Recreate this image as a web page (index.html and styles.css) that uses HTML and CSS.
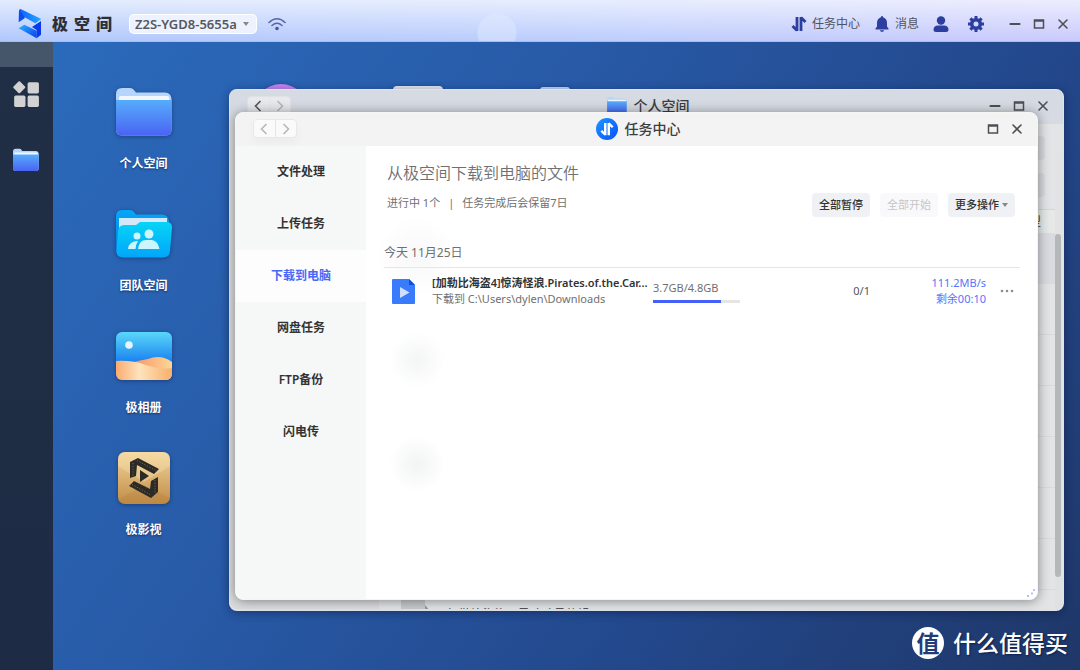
FILE: index.html
```html
<!DOCTYPE html>
<html lang="zh-CN">
<head>
<meta charset="utf-8">
<title>极空间</title>
<link rel="stylesheet" href="styles.css">
</head>
<body>
<svg class="defs" aria-hidden="true">
  <defs>
    <linearGradient id="folderFront" x1="0" y1="0" x2="0" y2="1"><stop offset="0" stop-color="#56adfb"/><stop offset="1" stop-color="#4a63f4"/></linearGradient>
    <linearGradient id="teamBack" x1="0" y1="0" x2="0" y2="1"><stop offset="0" stop-color="#04a8f8"/><stop offset="1" stop-color="#0a7be0"/></linearGradient>
    <linearGradient id="teamFront" x1="0" y1="0" x2="0" y2="1"><stop offset="0" stop-color="#06d4f6"/><stop offset="1" stop-color="#01a6fb"/></linearGradient>
    <linearGradient id="sky" x1="0" y1="0" x2="0" y2="1"><stop offset="0" stop-color="#5ad8fa"/><stop offset=".6" stop-color="#1c85f0"/></linearGradient>
    <linearGradient id="sand" x1="0" y1="0" x2="1" y2="0"><stop offset="0" stop-color="#fbab70"/><stop offset=".42" stop-color="#fde3bb"/><stop offset="1" stop-color="#f8b06a"/></linearGradient>
    <linearGradient id="dune" x1="0" y1="0" x2="1" y2="0"><stop offset="0" stop-color="#f98f62"/><stop offset="1" stop-color="#fcd697"/></linearGradient>
    <linearGradient id="gold" x1="0" y1="0" x2="0" y2="1"><stop offset="0" stop-color="#f2d59b"/><stop offset="1" stop-color="#c08c47"/></linearGradient>
    <linearGradient id="logoTop" x1="0" y1="0" x2="1" y2="0"><stop offset="0" stop-color="#0d62ff"/><stop offset="1" stop-color="#27a8ff"/></linearGradient>
    <linearGradient id="logoEnd" x1="0" y1="0" x2="1" y2="1"><stop offset="0" stop-color="#2bb4ff"/><stop offset="1" stop-color="#0a3cec"/></linearGradient>
  </defs>
  <symbol id="folder" viewBox="0 0 56 48">
    <path d="M0 6Q0 0 6 0H14Q16.500 0 18 2L20 4.500H49Q55 4.500 55.500 11V42Q55.500 47.500 49 47.500H6.500Q0 47.500 0 42Z" fill="#b5d5fc"/>
    <rect x="3" y="8" width="50" height="6" rx="1.500" fill="#f2f7fe"/>
    <path d="M0 12H55.500V42Q55.500 47.500 49 47.500H6.500Q0 47.500 0 42Z" fill="url(#folderFront)"/>
  </symbol>
  <symbol id="transfer" viewBox="0 0 16 16">
    <path d="M6 1V15M6 14.500L1.500 10M10 15V1M10 1.500L14.500 6" fill="none" stroke="currentColor" stroke-width="2.800"/>
  </symbol>
  <symbol id="prev" viewBox="0 0 8 12"><path d="M6.500 1L1.500 6L6.500 11" fill="none" stroke="currentColor" stroke-width="1.600"/></symbol>
  <symbol id="next" viewBox="0 0 8 12"><path d="M1.500 1L6.500 6L1.500 11" fill="none" stroke="currentColor" stroke-width="1.600"/></symbol>
  <symbol id="min" viewBox="0 0 12 12"><path d="M1.500 6H10.500" stroke="currentColor" stroke-width="2.200" stroke-linecap="round"/></symbol>
  <symbol id="max" viewBox="0 0 12 12"><path d="M1.500 2H10.500V10H1.500ZM1 3H11" fill="none" stroke="currentColor" stroke-width="1.500"/></symbol>
  <symbol id="close" viewBox="0 0 12 12"><path d="M2 2L10 10M10 2L2 10" stroke="currentColor" stroke-width="1.600" stroke-linecap="round"/></symbol>
</svg>
<div class="app">
  <header class="topbar">
    <div class="brand">
      <svg class="logo" viewBox="18 10 72 93" aria-hidden="true">
        <path d="M24 12L88 43L70 56L38 38Z" fill="url(#logoTop)"/>
        <path d="M24 12L38 36V41L20 53L21 18Z" fill="#0b4df2"/>
        <path d="M20 71L37 60L74 78V101Z" fill="url(#logoEnd)"/>
        <path d="M87 49V90L74 101V76L60 67Z" fill="#0a3bea"/>
      </svg>
      <div class="brand-name"><span>极</span><span>空</span><span>间</span></div>
    </div>
    <div class="device">
      <select class="device-select" aria-label="设备"><option>Z2S-YGD8-5655a</option></select>
      <svg class="caret" viewBox="0 0 6 4" aria-hidden="true"><path d="M0 0H6L3 4Z" fill="currentColor"/></svg>
    </div>
    <svg class="wifi" viewBox="0 0 18 14" aria-hidden="true"><path d="M1 5.500Q9-2 17 5.500M4 8.500Q9 4 14 8.500" fill="none" stroke="#5a65a8" stroke-width="1.600" stroke-linecap="round"/><circle cx="9" cy="11.500" r="1.800" fill="#4a559f"/></svg>
    <nav class="top-actions">
      <button class="top-action"><svg class="ic16" aria-hidden="true"><use href="#transfer"/></svg>任务中心</button>
      <button class="top-action"><svg class="ic16" viewBox="0 0 16 16" aria-hidden="true"><path d="M8 0Q9.300 0 9.300 1.500Q13 2.600 13 7V10.500L14.500 12.500V13.500H1.500V12.500L3 10.500V7Q3 2.600 6.700 1.500Q6.700 0 8 0ZM5.800 14.200H10.200Q9.500 16 8 16T5.800 14.200Z" fill="currentColor"/></svg>消息</button>
      <button class="top-action" aria-label="用户"><svg class="ic16" viewBox="0 0 16 16" aria-hidden="true"><circle cx="8" cy="4.500" r="4.200" fill="currentColor"/><path d="M.500 14Q.500 9.500 5 9.500H11Q15.500 9.500 15.500 14Q15.500 16 13 16H3Q.500 16 .500 14Z" fill="currentColor"/></svg></button>
      <button class="top-action" aria-label="设置"><svg class="ic16" viewBox="0 0 16 16" aria-hidden="true"><circle cx="8" cy="8" r="4.300" fill="none" stroke="currentColor" stroke-width="3.600"/><path d="M8 0V3M8 13V16M0 8H3M13 8H16M2.350 2.350L4.400 4.400M11.600 11.600L13.650 13.650M2.350 13.650L4.400 11.600M11.600 4.400L13.650 2.350" stroke="currentColor" stroke-width="3"/></svg></button>
    </nav>
    <div class="win-controls">
      <button aria-label="最小化"><svg><use href="#min"/></svg></button>
      <button aria-label="最大化"><svg><use href="#max"/></svg></button>
      <button aria-label="关闭"><svg><use href="#close"/></svg></button>
    </div>
  </header>
  <div class="workspace">
    <aside class="dock">
      <button class="dock-item" aria-label="应用"><svg class="dock-apps" viewBox="0 0 26 26" aria-hidden="true"><rect x="2.500" y="2.500" width="8.500" height="8.500" rx="1" transform="rotate(45 6.750 6.750)"/><rect x="14.500" y="2" width="10.500" height="10.500" rx="1.500"/><rect x="2" y="14.500" width="10.500" height="10.500" rx="1.500"/><rect x="14.500" y="14.500" width="10.500" height="10.500" rx="1.500"/></svg></button>
      <button class="dock-item" aria-label="打开个人空间"><svg class="dock-folder" aria-hidden="true"><use href="#folder"/></svg></button>
    </aside>
    <main class="desktop">
      <div class="shortcuts">
        <a class="shortcut" href="#"><span class="shortcut-icon"><svg class="app-wide" aria-hidden="true"><use href="#folder"/></svg></span><span class="shortcut-name">个人空间</span></a>
        <a class="shortcut" href="#"><span class="shortcut-icon"><svg class="app-wide" viewBox="0 0 56 48" aria-hidden="true"><path d="M0 6Q0 0 6 0H14Q16.500 0 18 2L20 4.500H46Q52 4.500 53 11V42H0Z" fill="url(#teamBack)"/><path d="M3 8H51V20H3Z" fill="#d5e8fb"/><path d="M2 22Q2.500 15 8 15H20L24 12H50Q56.500 12 56 18L54 41Q53.500 47.500 47 47.500H7Q0 47.500 .500 41Z" fill="url(#teamFront)"/><g fill="#cdf5fd"><circle cx="33" cy="24" r="4.500"/><circle cx="21" cy="26" r="3.500"/><path d="M22 39Q23 30 30 30H36Q42 31 43.500 39Z"/><path d="M12 39Q13 31 22 31Q20 34 19.500 39Z"/></g></svg></span><span class="shortcut-name">团队空间</span></a>
        <a class="shortcut" href="#"><span class="shortcut-icon"><svg class="app-wide" viewBox="0 0 56 48" aria-hidden="true"><clipPath id="photoClip"><rect width="56" height="48" rx="6"/></clipPath><g clip-path="url(#photoClip)"><rect width="56" height="48" fill="url(#sky)"/><circle cx="13" cy="13" r="3.800" fill="#e6f4fe"/><path d="M14 31Q25 28 32 27Q45 22 56 30V48H14Z" fill="url(#dune)"/><path d="M0 29Q16 28 30 33Q44 38 56 36V48H0Z" fill="url(#sand)"/></g></svg></span><span class="shortcut-name">极相册</span></a>
        <a class="shortcut" href="#"><span class="shortcut-icon"><svg class="app-square" viewBox="0 0 52 52" aria-hidden="true"><rect width="52" height="52" rx="7" fill="url(#gold)"/><path d="M0 14L26 30L52 14V7Q52 0 45 0H7Q0 0 0 7Z" fill="#fbe4b4" opacity=".35"/><path d="M0 48L26 33L52 46Q51 52 45 52H7Q1 52 0 48Z" fill="#b57a32" opacity=".25"/><g fill="#2c2a27"><path d="M20 6L41 17L36 22L19 13L18 24L12 26V10Z"/><path d="M22 18L31 24L22 30Z"/><path d="M40 25V40L33 46L11 34L16 29L32 37L33 29Z"/></g><path d="M19 8.500L39 19M15 11V25M37 28V41M14 32.500L33 43" fill="none" stroke="#8a7650" stroke-width=".8" stroke-dasharray="1.200 1.600"/></svg></span><span class="shortcut-name">极影视</span></a>
        <span class="shortcut peek"><span class="shortcut-icon"><i class="peek-disc"></i></span></span>
        <span class="shortcut peek"><span class="shortcut-icon"><i class="peek-card"></i></span></span>
        <span class="shortcut peek"><span class="shortcut-icon"><i class="peek-tab"></i></span></span>
      </div>

      <section class="window files-window">
        <header class="titlebar">
          <div class="pager"><button aria-label="后退" class="can"><svg><use href="#prev"/></svg></button><button aria-label="前进"><svg><use href="#next"/></svg></button></div>
          <h2 class="title"><svg class="title-folder" aria-hidden="true"><use href="#folder"/></svg>个人空间</h2>
          <div class="win-controls">
            <button aria-label="最小化"><svg><use href="#min"/></svg></button>
            <button aria-label="最大化"><svg><use href="#max"/></svg></button>
            <button aria-label="关闭"><svg><use href="#close"/></svg></button>
          </div>
        </header>
        <div class="files-body">
          <div class="files-side"></div>
          <div class="files-main">
            <div class="files-tools"><i></i><i></i></div>
            <div class="files-head">类型</div>
            <div class="files-list">
              <div class="files-row selected"></div>
              <div class="files-row"></div>
              <div class="files-row"></div>
              <div class="files-row"></div>
              <div class="files-row"></div>
              <div class="files-row"></div>
              <div class="files-row"></div>
              <div class="files-row"><svg class="file-thumb" viewBox="0 0 32 36" aria-hidden="true"><path d="M0 0H24V36H0Z" fill="#c9cacc"/><path d="M24 8L32 17H24Z" fill="#9b9d9f"/></svg><span>[加勒比海盗4]黑珍珠号的诅咒.Pirates.of.the.Caribbean</span></div>
            </div>
          </div>
          <div class="scroll"><i></i></div>
        </div>
      </section>

      <section class="window task-window">
        <header class="titlebar">
          <div class="pager"><button aria-label="后退"><svg><use href="#prev"/></svg></button><button aria-label="前进"><svg><use href="#next"/></svg></button></div>
          <h2 class="title"><span class="title-disc"><svg aria-hidden="true"><use href="#transfer"/></svg></span>任务中心</h2>
          <div class="win-controls">
            <button aria-label="最大化"><svg><use href="#max"/></svg></button>
            <button aria-label="关闭"><svg><use href="#close"/></svg></button>
          </div>
        </header>
        <div class="task-body">
          <nav class="tabs">
            <button>文件处理</button>
            <button>上传任务</button>
            <button class="active">下载到电脑</button>
            <button>网盘任务</button>
            <button>FTP备份</button>
            <button>闪电传</button>
          </nav>
          <div class="task-main">
            <div class="intro">
              <div>
                <h1>从极空间下载到电脑的文件</h1>
                <p><span>进行中 1个</span><span>|</span><span>任务完成后会保留7日</span></p>
              </div>
              <div class="bulk">
                <button>全部暂停</button>
                <button disabled>全部开始</button>
                <button aria-haspopup="menu">更多操作<svg class="caret" viewBox="0 0 6 4" aria-hidden="true"><path d="M0 0H6L3 4Z" fill="currentColor"/></svg></button>
              </div>
            </div>
            <h3 class="day">今天 11月25日</h3>
            <div class="task">
              <svg class="task-icon" viewBox="0 0 23 25" aria-hidden="true"><path d="M1 0H17L23 6V24Q23 25 22 25H1Q0 25 0 24V1Q0 0 1 0Z" fill="#3a7bfb"/><path d="M17 0L23 6H17Z" fill="#0c4fe6"/><path d="M8 8L17.500 13.500L8 19Z" fill="#cfdffe"/></svg>
              <div class="task-file"><strong>[加勒比海盗4]惊涛怪浪.Pirates.of.the.Car...</strong><span>下载到 C:\Users\dylen\Downloads</span></div>
              <div class="task-progress"><span id="size">3.7GB/4.8GB</span><div class="bar" role="progressbar" aria-labelledby="size" aria-valuenow="78"><i style="width:78%"></i></div></div>
              <div class="task-count">0/1</div>
              <div class="task-speed"><span>111.2MB/s</span><span>剩余00:10</span></div>
              <button class="more" aria-label="更多"><svg viewBox="0 0 14 4" aria-hidden="true"><circle cx="2" cy="2" r="1.300"/><circle cx="7" cy="2" r="1.300"/><circle cx="12" cy="2" r="1.300"/></svg></button>
            </div>
          </div>
        </div>
        <svg class="grip" viewBox="0 0 8 8" aria-hidden="true"><path d="M6 0H8V2H6ZM4 3.500H6V5.500H4ZM0 6H2V8H0Z" fill="#b9c1f3"/></svg>
      </section>
    </main>
  </div>
  <div class="watermark"><span class="watermark-badge">值</span>什么值得买</div>
</div>
</body>
</html>
```
FILE: styles.css
```css
* { box-sizing: border-box; }
body {
  margin: 0;
  font: 12px/16px "Noto Sans", "Noto Sans CJK SC", sans-serif;
  color: #333;
}
h1, h2, h3, p { margin: 0; font-weight: 400; }
button { border: 0; padding: 0; background: none; font: inherit; color: inherit; }
svg, i { display: block; flex: none; }
.defs { position: absolute; width: 0; height: 0; }

.app { position: relative; display: flex; flex-direction: column; height: 100vh; overflow: hidden; }

/* Top bar */
.topbar {
  display: flex;
  align-items: center;
  flex: none;
  height: 42px;
  padding: 6px 11px 0 18px;
  border-bottom: 1px solid #a9bcf3;
  background:
    radial-gradient(circle at 497px 33px, rgba(225, 235, 255, .45) 19px, transparent 20px),
    linear-gradient(180deg, rgba(255, 255, 255, .65), rgba(255, 255, 255, 0)),
    linear-gradient(90deg, #b0c8fc, #bccdfd 55%, #cacafc);
}
.brand { display: flex; align-items: center; gap: 10px; }
.logo { width: 24px; height: 31px; }
.brand-name { display: flex; gap: 6px; font-size: 16px; line-height: 24px; font-weight: 900; color: #2d3038; }
.device {
  display: flex;
  align-items: center;
  margin-left: 18px;
  padding: 0 7px 0 5px;
  height: 18px;
  border-radius: 4px;
  background: #edf2fe;
  box-shadow: 0 0 0 1px #fff;
  color: #999;
}
.device-select {
  appearance: none;
  border: 0;
  padding: 0;
  width: 108px;
  background: none;
  font: 600 13px/18px "Noto Sans", sans-serif;
  color: #56585f;
}
.caret { width: 6px; height: 4px; color: #888; }
.wifi { width: 18px; height: 14px; margin-left: 12px; }
.top-actions { display: flex; align-items: center; gap: 14px; margin-left: auto; color: #2c3f9f; }
.top-action { display: flex; align-items: center; gap: 5px; color: #2c3f9f; }
.top-action + .top-action + .top-action { margin-right: 5px; }
.ic16 { width: 16px; height: 16px; color: #2c3f9f; }
.top-action { font-size: 12px; }
.top-actions .top-action:nth-child(-n+2) { color: #50535e; }
.win-controls { display: flex; align-items: center; gap: 12px; color: #4d4f55; }
.win-controls svg { width: 12px; height: 12px; }
.topbar .win-controls { margin-left: 20px; }

/* Workspace */
.workspace { display: flex; flex: 1; min-height: 0; }
.dock {
  flex: none;
  width: 53px;
  padding: 38px 2px 0 0;
  display: flex;
  flex-direction: column;
  align-items: center;
  gap: 40px;
  background: linear-gradient(#46566a, #46566a) 0 0 / 100% 25px no-repeat, linear-gradient(#202f45, #1d2b44);
}
.dock-item { display: flex; }
.dock-apps { width: 28px; height: 28px; fill: #d2d2d2; }
.dock-folder { width: 26px; height: 24px; }
.desktop {
  position: relative;
  flex: 1;
  min-width: 0;
  background: linear-gradient(125deg, #2b6abb 0%, #285ba8 35%, #23488c 68%, #1f3768 100%);
}
.shortcuts {
  display: grid;
  grid-auto-flow: column;
  grid-template-rows: repeat(4, auto);
  grid-auto-columns: 137px;
  row-gap: 35px;
  padding: 44px 0 0 22px;
}
.shortcut { display: flex; flex-direction: column; align-items: center; gap: 17px; color: #fff; text-decoration: none; }
.shortcut-icon { display: flex; align-items: center; justify-content: center; height: 52px; filter: drop-shadow(0 1px 2px rgba(10, 30, 80, .5)); }
.shortcut-name { font-weight: 700; line-height: 18px; text-shadow: 0 1px 2px rgba(10, 30, 80, .7); }
.app-wide { width: 56px; height: 48px; }
.app-square { width: 52px; height: 52px; }
.peek { grid-row: 1; }
.peek-disc { width: 56px; height: 56px; border-radius: 50%; background: #c183ec; }
.peek-card { width: 50px; height: 52px; border-radius: 4px; background: #e3e7ee; }
.peek-tab { width: 30px; height: 50px; border-radius: 3px; background: #b9d7f3; }

/* Windows */
.window { position: absolute; display: flex; flex-direction: column; overflow: hidden; border-radius: 8px; }
.titlebar { display: grid; grid-template-columns: 1fr auto 1fr; align-items: center; flex: none; height: 34px; }
.titlebar .win-controls { justify-self: end; }
.title { display: flex; align-items: center; gap: 7px; font-size: 14px; line-height: 20px; font-weight: 500; color: #3c3d40; }
.pager { display: flex; width: 44px; height: 19px; border: 1px solid #e5e6e9; border-radius: 4px; background: #fafafa; color: #b7b7b9; }
.pager button { flex: 1; display: flex; align-items: center; justify-content: center; }
.pager button + button { border-left: 1px solid #e5e6e9; }
.pager svg { width: 8px; height: 12px; }
.pager .can { color: #555; }

.files-window {
  left: 176px; right: 16px; top: 47px; bottom: 59px;
  border: 1px solid #e0e3ea;
  border-bottom-width: 2px;
  background: #e3e4e6;
  box-shadow: 0 2px 10px rgba(8, 20, 60, .45);
}
.files-window .titlebar { padding: 0 14px 3px 17px; background: #d6dae2; }
.files-window .pager { background: #e7e9ed; border-color: #dfe1e6; }
.title-folder { width: 20px; height: 17px; }
.files-body { display: flex; flex: 1; min-height: 0; }
.files-side { flex: none; width: 149px; background: #dcdddf; }
.files-main { flex: 1; min-width: 0; display: flex; flex-direction: column; overflow: hidden; }
.files-tools { flex: none; height: 86px; padding: 12px 10px 0 0; display: flex; flex-direction: column; gap: 13px; align-items: flex-end; border-bottom: 1px solid #d5d6d9; }
.files-tools i { width: 40px; height: 24px; border-radius: 4px; background: #d8d9de; }
.files-head { flex: none; height: 23px; padding-right: 14px; text-align: right; line-height: 23px; background: #e7e8e8; }
.files-row { display: flex; align-items: center; gap: 10px; height: 51px; padding-left: 22px; border-bottom: 1px solid #d9dadd; white-space: nowrap; }
.files-row.selected { background: #d9dbe1; }
.file-thumb { width: 32px; height: 36px; }
.scroll { flex: none; width: 8px; padding-top: 110px; padding-bottom: 32px; background: linear-gradient(#e3e4e6, #dfe1e2); }
.scroll i { width: 6px; height: 100%; border-radius: 3px; background: #b5b8b9; }

.task-window {
  left: 182px; right: 42px; top: 70px; bottom: 70px;
  border: 1px solid #f5f5f5;
  background: #fff;
  box-shadow: 0 1px 12px rgba(0, 0, 0, .42);
}
.task-window .titlebar { height: 33px; padding: 0 14px 2px 17px; background: #f3f3f3; }
.task-window .pager { border-color: #e8e8e9; box-shadow: 0 5px 10px rgba(0, 0, 0, .03); }
.title-disc { display: flex; align-items: center; justify-content: center; width: 22px; height: 22px; border-radius: 50%; background: linear-gradient(135deg, #1c97ff, #0c50f8); color: #fff; }
.title-disc svg { width: 14px; height: 14px; }
.task-body { display: flex; flex: 1; min-height: 0; }
.tabs { flex: none; width: 130px; background: #f6f7f7; }
.tabs button { display: block; width: 100%; height: 52px; font-weight: 600; font-size: 12px; text-align: center; color: #333; }
.tabs .active { background: #fdfdfe; color: #4a68f8; }
.task-main {
  flex: 1;
  min-width: 0;
  padding: 15px 17px 0 18px;
  background:
    radial-gradient(circle at 51px 214px, #f4f5f5, transparent 28px),
    radial-gradient(circle at 51px 318px, #f2f3f3, transparent 28px),
    radial-gradient(circle at 51px 110px, #f8f8f9, transparent 40px),
    #fff;
}
.intro { display: flex; justify-content: space-between; align-items: flex-end; padding: 0 5px 0 3px; }
.intro h1 { font-size: 16px; line-height: 24px; color: #707072; font-weight: 350; }
.intro p { display: flex; gap: 8px; margin-top: 10px; padding-bottom: 6px; font-size: 11px; line-height: 16px; color: #707072; }
.bulk { display: flex; gap: 10px; }
.bulk button { display: flex; align-items: center; gap: 3px; height: 24px; padding: 0 7px; border-radius: 4px; background: #f0f1f5; font-size: 11px; font-weight: 500; color: #333; }
.bulk button:disabled { background: #f9f9fb; color: #c6c6c8; font-weight: 400; }
.day { margin-top: 28px; padding-bottom: 6px; border-bottom: 1px solid #e6e6e6; line-height: 16px; font-size: 12px; color: #707072; }
.task { display: grid; grid-template-columns: 40px 221px 87px 1fr 116px 28px; align-items: center; padding: 7px 6px 0 8px; font-size: 11px; line-height: 16px; color: #707072; }
.task-icon { width: 23px; height: 25px; }
.task-file { display: flex; flex-direction: column; min-width: 0; }
.task-file strong { white-space: nowrap; font-weight: 600; color: #333; }
.task-progress { display: flex; flex-direction: column; gap: 4px; }
.bar { height: 3px; background: #e5e5e6; }
.bar i { height: 100%; background: #4560f8; }
.task-count { text-align: right; color: #555; }
.task-speed { display: flex; flex-direction: column; text-align: right; color: #5b72fa; }
.more { display: flex; justify-content: flex-end; }
.more svg { width: 14px; height: 4px; fill: #8d8d90; }
.grip { position: absolute; right: 2px; bottom: 2px; width: 8px; height: 8px; }

/* Overlay mark */
.watermark { position: absolute; right: 12px; bottom: 11px; display: flex; align-items: center; gap: 9px; font-size: 23px; line-height: 32px; font-weight: 500; color: #fff; text-shadow: 1px 1px 2px rgba(0, 10, 50, .6); }
.watermark-badge { width: 32px; height: 32px; border-radius: 50%; background: #fff; color: #213c78; font-size: 23px; font-weight: 700; text-align: center; text-shadow: none; }
```
